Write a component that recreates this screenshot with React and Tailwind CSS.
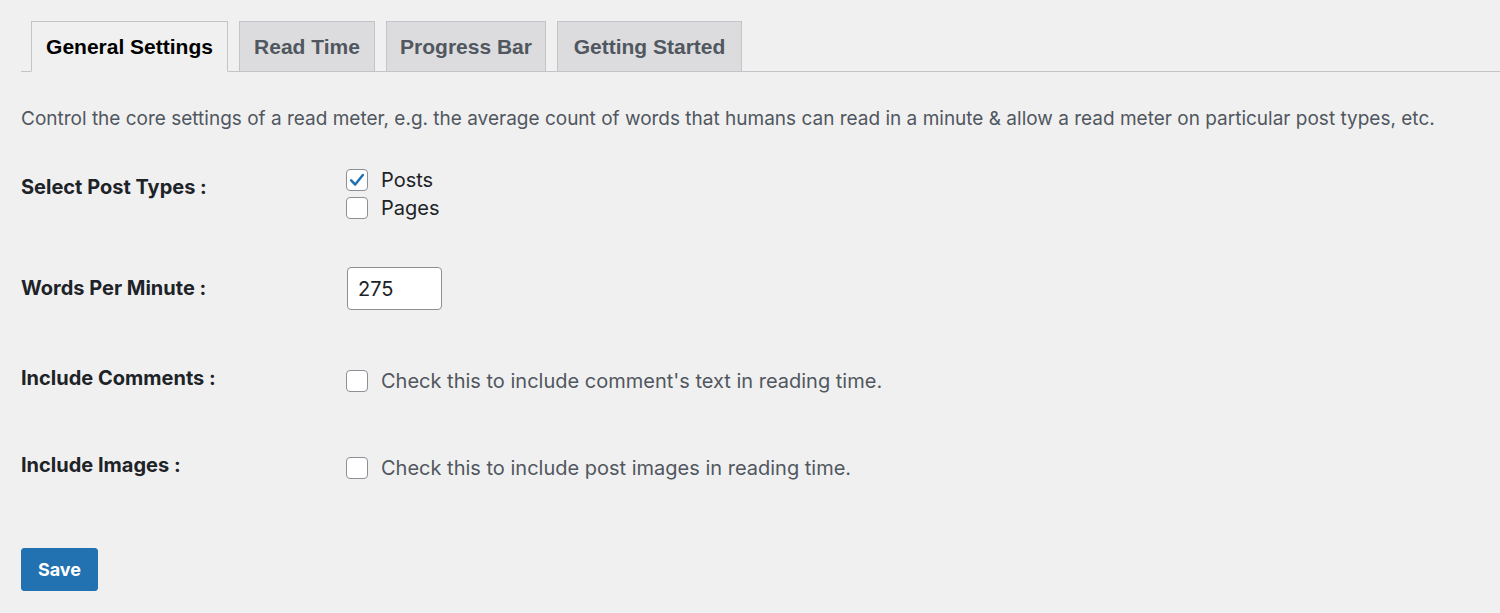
import React from "react";

const tabs = [
  { name: "General Settings", width: "w-[197px]", active: true },
  { name: "Read Time", width: "w-[136px]" },
  { name: "Progress Bar", width: "w-[160px]" },
  { name: "Getting Started", width: "w-[185px]" },
];

const Checkbox = ({ checked }) => (
  <span className="flex items-center justify-center w-[22px] h-[22px] shrink-0 rounded-[4px] border border-[#8c8f94] bg-white">
    {checked && (
      <svg width="18" height="18" viewBox="0 0 20 20">
        <path
          d="M3.5 10.5 L8 15 L16.5 4.5"
          fill="none"
          stroke="#2271b1"
          strokeWidth="2.8"
          strokeLinecap="round"
          strokeLinejoin="round"
        />
      </svg>
    )}
  </span>
);

const Label = ({ children, className = "" }) => (
  <div className={`w-[325px] shrink-0 text-[20px] leading-[24px] font-bold text-[#1d2327] ${className}`}>
    {children}
  </div>
);

const App = () => {
  return (
    <div
      className="w-full h-[613px] bg-[#f0f0f1] pl-[21px] overflow-hidden"
      style={{ fontFamily: 'Inter, "Liberation Sans", Arial, sans-serif' }}
    >
      <div
        className="flex items-end gap-[11px] pt-[21px] pl-[10px] border-b border-[#c3c4c7]"
        style={{ fontFamily: '"Liberation Sans", Arial, sans-serif' }}
      >
        {tabs.map((tab) => (
          <div
            key={tab.name}
            className={`${tab.width} h-[51px] -mb-px flex items-center justify-center border border-[#c3c4c7] text-[21px] font-bold ${
              tab.active
                ? "bg-[#f0f0f1] border-b-[#f0f0f1] text-[#000]"
                : "bg-[#dcdcde] text-[#50575e]"
            }`}
          >
            {tab.name}
          </div>
        ))}
      </div>

      <p className="mt-[35px] text-[19px] leading-[24px] text-[#50575e]">
        Control the core settings of a read meter, e.g. the average count of words that humans can read in a minute &amp; allow a read meter on particular post types, etc.
      </p>

      <div className="mt-[35px] flex">
        <Label className="pt-[9px]">Select Post Types :</Label>
        <div className="flex flex-col text-[20px] text-[#1d2327]">
          <label className="flex items-center gap-[13px] h-[28px]">
            <Checkbox checked />
            Posts
          </label>
          <label className="flex items-center gap-[13px] h-[28px]">
            <Checkbox />
            Pages
          </label>
        </div>
      </div>

      <div className="mt-[45px] flex">
        <Label className="pt-[9px]">Words Per Minute :</Label>
        <input
          type="text"
          defaultValue="275"
          className="w-[95px] h-[43px] ml-px px-[10px] rounded-[4px] border border-[#8c8f94] bg-white text-[20px] text-[#1d2327] outline-none"
          style={{ fontFamily: 'Inter, "Liberation Sans", Arial, sans-serif' }}
        />
      </div>

      <div className="mt-[56px] flex">
        <Label>Include Comments :</Label>
        <label className="mt-px flex items-center gap-[13px] h-[28px] text-[20px] text-[#50575e]">
          <Checkbox />
          Check this to include comment&apos;s text in reading time.
        </label>
      </div>

      <div className="mt-[58px] flex">
        <Label>Include Images :</Label>
        <label className="mt-px flex items-center gap-[13px] h-[28px] text-[20px] text-[#50575e]">
          <Checkbox />
          Check this to include post images in reading time.
        </label>
      </div>

      <button className="mt-[66px] w-[77px] h-[43px] rounded-[3px] bg-[#2271b1] border border-[#2271b1] text-white text-[18px] font-bold">
        Save
      </button>
    </div>
  );
};

export default App;
